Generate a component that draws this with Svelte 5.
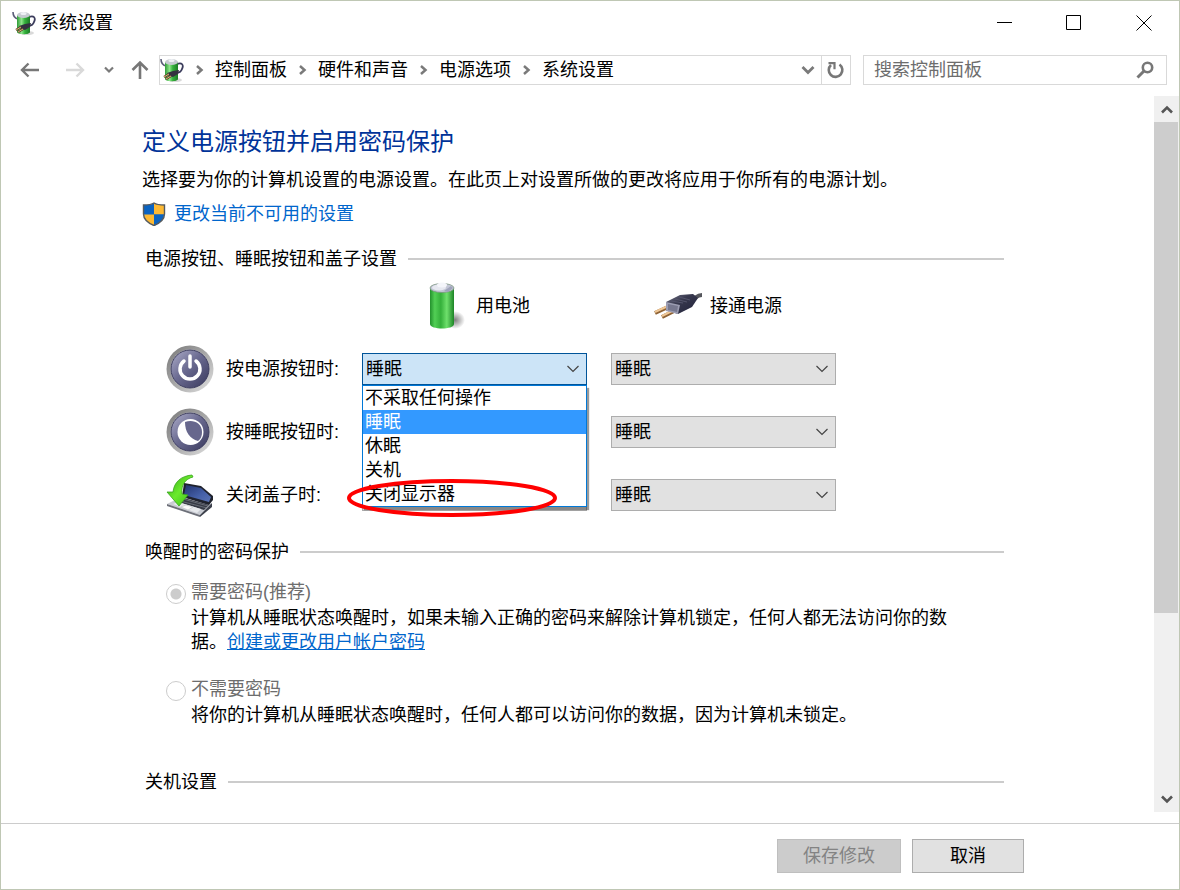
<script>
  const crumbs = ['控制面板', '硬件和声音', '电源选项', '系统设置'];
  const actions = ['不采取任何操作', '睡眠', '休眠', '关机', '关闭显示器'];

  let rows = $state([
    { id: 'power', label: '按电源按钮时:', battery: '睡眠', plugged: '睡眠' },
    { id: 'sleep', label: '按睡眠按钮时:', battery: '睡眠', plugged: '睡眠' },
    { id: 'lid', label: '关闭盖子时:', battery: '睡眠', plugged: '睡眠' }
  ]);

  let openRow = $state('power');
  let search = $state('');

  function toggle(e, id) {
    e.preventDefault();
    openRow = openRow === id ? '' : id;
  }

  function choose(row, action) {
    row.battery = action;
    openRow = '';
  }
</script>

{#snippet powerIcon(id)}
  <svg class="app-icon" viewBox="0 0 24 24" aria-hidden="true">
    <defs>
      <linearGradient id="{id}-body">
        <stop offset="0" stop-color="#2f9b38" />
        <stop offset=".35" stop-color="#8fe58a" />
        <stop offset=".6" stop-color="#35b23c" />
        <stop offset="1" stop-color="#1c7a26" />
      </linearGradient>
    </defs>
    <ellipse cx="15" cy="22" rx="7" ry="2" fill="#000" opacity=".15" />
    <path d="M17 6c5-2 7 1 5 5-1 3-3 4-6 4" fill="none" stroke="#3b3c5c" stroke-width="1.800" />
    <path d="M1 1c0 4 1 6 5 7" fill="none" stroke="#5a5c78" stroke-width="1.600" />
    <path d="M5 4v17c0 3 13 3 13 0V4z" fill="url(#{id}-body)" />
    <ellipse cx="11.500" cy="4" rx="6.500" ry="3" fill="#c5cad0" />
    <ellipse cx="11.500" cy="2.500" rx="3" ry="1.500" fill="#eef0f4" />
    <path d="M7 15l6-2 6-1-1 4-5 3-4-1z" fill="#33323f" />
    <path d="M9 16l-5 3M11 18l-5 3" stroke="#5a4128" stroke-width="2.200" />
    <path d="M9 16l-5 3M11 18l-5 3" stroke="#dcb079" />
  </svg>
{/snippet}

{#snippet crumbArrow()}
  <svg class="crumb-arrow" viewBox="0 0 31 12" aria-hidden="true">
    <path d="M13 2l4.500 4L13 10" fill="none" stroke="#7a7a7a" stroke-width="2.500" />
  </svg>
{/snippet}

{#snippet selectArrow()}
  <svg class="select-arrow" viewBox="0 0 12 8" aria-hidden="true">
    <path d="M.5 1l5.500 5.500L11.500 1" fill="none" stroke="#444" stroke-width="1.200" />
  </svg>
{/snippet}

{#snippet rowIcon(id)}
  {#if id === 'lid'}
    <svg class="big-icon" viewBox="0 0 48 48" aria-hidden="true">
      <defs>
        <linearGradient id="lid-screen" x2="1" y2="1">
          <stop offset="0" stop-color="#22336f" />
          <stop offset=".6" stop-color="#4560a8" />
          <stop offset="1" stop-color="#5b74b4" />
        </linearGradient>
        <linearGradient id="lid-arrow" x2="1" y2="1">
          <stop offset="0" stop-color="#2fa514" />
          <stop offset=".5" stop-color="#6bea2d" />
          <stop offset="1" stop-color="#38b91a" />
        </linearGradient>
      </defs>
      <path d="M1 33l12-6 33 6-12 11z" fill="#c9ccd3" />
      <path d="M1 33l33 11v2L1 35z" fill="#6d7079" />
      <path d="M34 44l12-12v4L34 46z" fill="#3d414c" />
      <path d="M12 31l6-4 25 7-5 5z" fill="#363a45" />
      <path d="M14 30l27 7M17 28l25 7" stroke="#868b96" stroke-width=".6" />
      <path d="M7 33l5-2 23 7-4 4z" fill="#e6e8ec" />
      <path d="M15 36l5-2 7 2-5 3z" fill="#fafafa" stroke="#b4b8bf" stroke-width=".5" />
      <path d="M18 12l17 3 12 10v4l-4 5-27-8z" fill="#1f222d" />
      <path d="M20 14l15 3 10 9-2 5-25-7z" fill="url(#lid-screen)" />
      <path d="M26 4C15 5 8 11 7 21l-6 0 12 14 9-11-6-1C15 14 19 8 27 6z" fill="url(#lid-arrow)" stroke="#39a51e" stroke-width=".8" />
    </svg>
  {:else}
    <svg class="big-icon" viewBox="0 0 48 48" aria-hidden="true">
      <defs>
        <linearGradient id="{id}-rim" x2="1" y2="1">
          <stop offset="0" stop-color="#777" />
          <stop offset=".5" stop-color="#a8a8a8" />
          <stop offset="1" stop-color="#e2e2e2" />
        </linearGradient>
        <linearGradient id="{id}-face" x2="1" y2="1">
          <stop offset="0" stop-color="#b0b0cc" />
          <stop offset=".45" stop-color="#6b6b91" />
          <stop offset="1" stop-color="#38385c" />
        </linearGradient>
      </defs>
      <circle cx="24" cy="24" r="23.500" fill="url(#{id}-rim)" />
      <circle cx="24" cy="24" r="19.500" fill="#dddde4" />
      <circle cx="24" cy="24" r="19" fill="url(#{id}-face)" stroke="#3c3c5c" />
      {#if id === 'power'}
        <path d="M18 16a10 10 0 1 0 12 0" fill="none" stroke="#fff" stroke-width="3.500" stroke-linecap="round" />
        <path d="M24 11v11" stroke="#fff" stroke-width="3.500" stroke-linecap="round" />
      {:else}
        <circle cx="24.500" cy="24" r="13" fill="#fff" />
        <path d="M19 14c7-3 17 0 17 10 0 4-1 7-4 9-8-2-13-9-13-19z" fill="#67678d" />
      {/if}
    </svg>
  {/if}
{/snippet}

<div class="window">
  <header class="title-bar">
    {@render powerIcon('title')}
    <span class="title">系统设置</span>
    <div class="window-buttons">
      <button aria-label="最小化">
        <svg viewBox="0 0 16 16"><path d="M1 7.500h15" stroke="#000" /></svg>
      </button>
      <button aria-label="最大化">
        <svg viewBox="0 0 16 16"><path d="M.5.500h14v14H.5z" fill="none" stroke="#000" /></svg>
      </button>
      <button aria-label="关闭">
        <svg viewBox="0 0 16 16"><path d="M.5.500l15 15M15.500.500l-15 15" stroke="#000" /></svg>
      </button>
    </div>
  </header>

  <nav class="nav-bar">
    <button class="nav-step" aria-label="后退">
      <svg width="20" height="16" viewBox="0 0 20 16"><path d="M19 8H2M8.500 1.500L2 8l6.500 6.500" fill="none" stroke="#777" stroke-width="2.400" /></svg>
    </button>
    <button class="nav-step" aria-label="前进">
      <svg width="20" height="16" viewBox="0 0 20 16"><path d="M1 8h17M11.500 1.500L18 8l-6.500 6.500" fill="none" stroke="#d9d9d9" stroke-width="2.400" /></svg>
    </button>
    <button class="nav-recent" aria-label="最近浏览的位置">
      <svg width="10" height="8" viewBox="0 0 10 8"><path d="M1 1.500l4 4 4-4" fill="none" stroke="#7a7a7a" stroke-width="2.200" /></svg>
    </button>
    <button class="nav-up" aria-label="向上">
      <svg width="18" height="20" viewBox="0 0 18 20"><path d="M9 19V3M1.500 10L9 2.500l7.500 7.500" fill="none" stroke="#777" stroke-width="2.600" /></svg>
    </button>

    <div class="address">
      {@render powerIcon('address')}
      {#each crumbs as crumb}
        {@render crumbArrow()}
        <a href="#top">{crumb}</a>
      {/each}
      <button class="address-drop" aria-label="以前的位置">
        <svg width="14" height="10" viewBox="0 0 14 10"><path d="M1.500 2L7 7.500 12.500 2" fill="none" stroke="#7a7a7a" stroke-width="2.800" /></svg>
      </button>
      <button class="refresh" aria-label="刷新">
        <svg width="18" height="18" viewBox="0 0 18 18">
          <path d="M12.500 3.500a6.800 6.800 0 1 1-8.500.5" fill="none" stroke="#777" stroke-width="2.600" />
          <path d="M1.500 2.200h6v6" fill="none" stroke="#777" stroke-width="2.200" />
        </svg>
      </button>
    </div>

    <div class="search">
      <input type="text" aria-label="搜索控制面板" placeholder="搜索控制面板" bind:value={search} />
      <svg width="18" height="18" viewBox="0 0 18 18" aria-hidden="true">
        <circle cx="11.500" cy="6.500" r="4.700" fill="none" stroke="#777" stroke-width="2.600" />
        <path d="M8 10L1.500 16.500" stroke="#777" stroke-width="3" />
      </svg>
    </div>
  </nav>

  <div class="viewport">
    <main>
      <h1>定义电源按钮并启用密码保护</h1>
      <p class="intro">选择要为你的计算机设置的电源设置。在此页上对设置所做的更改将应用于你所有的电源计划。</p>
      <a class="elevate" href="#change">
        <svg width="24" height="24" viewBox="0 0 24 24" aria-hidden="true">
          <path d="M12 1c3 2 7 2 10 2v9c0 5-4 9-10 12C6 21 2 17 2 12V3c3 0 7 0 10-2z" fill="#0a63c2" />
          <path d="M12 1c3 2 7 2 10 2v9.500H12zM2 12.500h10V24C6 21 2 17 2 12.500z" fill="#fdb933" />
          <path d="M12 12.500h10C22 17 18 21 12 24z" fill="#0a63c2" />
          <path d="M12 1c3 2 7 2 10.500 2v9c0 5-4.500 9-10.500 11.500C6 21 1.500 17 1.500 12V3C5 3 9 3 12 1z" fill="none" stroke="#555b60" stroke-width="1.400" />
        </svg>
        更改当前不可用的设置
      </a>

      <section>
        <h2>电源按钮、睡眠按钮和盖子设置</h2>
        <div class="options">
          <div class="source on-battery">
            <svg class="big-icon" viewBox="0 0 48 48" aria-hidden="true">
              <defs>
                <linearGradient id="battery-body">
                  <stop offset="0" stop-color="#23912d" />
                  <stop offset=".2" stop-color="#52cf55" />
                  <stop offset=".45" stop-color="#35b03b" />
                  <stop offset=".7" stop-color="#6fe06c" />
                  <stop offset="1" stop-color="#1c8426" />
                </linearGradient>
                <radialGradient id="battery-shadow">
                  <stop offset="0" stop-color="#000" stop-opacity=".5" />
                  <stop offset="1" stop-color="#000" stop-opacity="0" />
                </radialGradient>
              </defs>
              <ellipse cx="35" cy="38" rx="10" ry="9" fill="url(#battery-shadow)" />
              <path d="M10 6v36c0 6 24 6 24 0V6z" fill="url(#battery-body)" />
              <ellipse cx="22" cy="6" rx="12" ry="4.500" fill="#c3c6d6" stroke="#769079" stroke-width=".7" />
              <ellipse cx="19" cy="5.500" rx="7" ry="3" fill="#e6e8f0" />
              <path d="M24 9l7-5 2 2-5 4z" fill="#9fa3bb" />
              <ellipse cx="22" cy="3" rx="5" ry="2.500" fill="#f4f5fa" />
            </svg>
            用电池
          </div>
          <div class="source on-mains">
            <svg class="big-icon" viewBox="0 0 48 48" aria-hidden="true">
              <defs>
                <linearGradient id="plug-body" x2="1" y2="1">
                  <stop offset="0" stop-color="#77788c" />
                  <stop offset=".4" stop-color="#38394e" />
                  <stop offset="1" stop-color="#20213a" />
                </linearGradient>
              </defs>
              <path d="M14 25L1 31M20 29L8 35" stroke="#8e6234" stroke-width="4" />
              <path d="M14 24L1 30M20 28L8 34" stroke="#efc796" stroke-width="2" />
              <path d="M38 17c4 0 4-4 10-4" stroke="#55565c" stroke-width="4" fill="none" />
              <path d="M12 20l14-7 13-1 5 4-6 9-14 7-3-1z" fill="url(#plug-body)" />
              <path d="M12 20l14 3-2 9-12-3z" fill="#9c9db2" />
              <path d="M14 22l10 2-1 6-9-2z" fill="#77788f" />
              <path d="M17 19l12 2M21 17l12 3M25 15l11 3" stroke="#54556c" />
            </svg>
            接通电源
          </div>

          {#each rows as row (row.id)}
            {@render rowIcon(row.id)}
            <label class="row-label" for="{row.id}-battery">{row.label}</label>
            <div class="picker">
              <select
                id="{row.id}-battery"
                class:open={openRow === row.id}
                bind:value={row.battery}
                onmousedown={(e) => toggle(e, row.id)}
              >
                {#each actions as action}
                  <option>{action}</option>
                {/each}
              </select>
              {@render selectArrow()}
              {#if openRow === row.id}
                <div class="popup" role="listbox" aria-label={row.label}>
                  {#each actions as action}
                    <button role="option" aria-selected={row.battery === action} onclick={() => choose(row, action)}>{action}</button>
                  {/each}
                  <svg class="marker" viewBox="0 0 212 40" aria-hidden="true">
                    <ellipse cx="106" cy="20" rx="103" ry="17" fill="none" stroke="#f00" stroke-width="4" />
                  </svg>
                </div>
              {/if}
            </div>
            <div class="picker mains">
              <select id="{row.id}-plugged" aria-label="{row.label} 接通电源" bind:value={row.plugged}>
                {#each actions as action}
                  <option>{action}</option>
                {/each}
              </select>
              {@render selectArrow()}
            </div>
          {/each}
        </div>
      </section>

      <section>
        <h2>唤醒时的密码保护</h2>
        <div class="choices">
          <div class="choice">
            <input type="radio" id="need-password" name="password" checked disabled />
            <label for="need-password">需要密码(推荐)</label>
            <p>计算机从睡眠状态唤醒时，如果未输入正确的密码来解除计算机锁定，任何人都无法访问你的数据。<a href="#password">创建或更改用户帐户密码</a></p>
          </div>
          <div class="choice">
            <input type="radio" id="no-password" name="password" disabled />
            <label for="no-password">不需要密码</label>
            <p>将你的计算机从睡眠状态唤醒时，任何人都可以访问你的数据，因为计算机未锁定。</p>
          </div>
        </div>
      </section>

      <section class="shutdown">
        <h2>关机设置</h2>
      </section>
    </main>

    <div class="scrollbar">
      <button aria-label="向上滚动">
        <svg width="12" height="10" viewBox="0 0 12 10"><path d="M1 8.500l5-5 5 5" fill="none" stroke="#555" stroke-width="2.600" /></svg>
      </button>
      <div class="track"><div class="thumb"></div></div>
      <button aria-label="向下滚动">
        <svg width="12" height="10" viewBox="0 0 12 10"><path d="M1 2.500l5 5 5-5" fill="none" stroke="#555" stroke-width="2.600" /></svg>
      </button>
    </div>
  </div>

  <footer>
    <button class="save" disabled>保存修改</button>
    <button class="cancel">取消</button>
  </footer>
</div>

<style>
  :global(body) {
    margin: 0;
    background: #fff;
  }

  .window {
    display: flex;
    flex-direction: column;
    box-sizing: border-box;
    height: 100vh;
    border: 1px solid #bfc7b4;
    background: #fff;
    color: #000;
    font-family: 'Liberation Sans', 'Noto Sans CJK SC', sans-serif;
    font-size: 18px;
    font-weight: 400;
    line-height: 24px;
  }

  button,
  input,
  select {
    box-sizing: border-box;
    margin: 0;
    padding: 0;
    border: 0;
    border-radius: 0;
    background: none;
    color: inherit;
    font: inherit;
  }

  svg {
    flex: none;
    display: block;
  }

  h1,
  h2,
  p {
    margin: 0;
    font-weight: inherit;
  }

  a {
    color: #0066cc;
  }

  .app-icon {
    width: 24px;
    height: 24px;
  }

  .big-icon {
    width: 48px;
    height: 48px;
  }

  /* title bar */
  .title-bar {
    display: flex;
    align-items: center;
    height: 44px;
    padding-left: 11px;
  }

  .title {
    flex: 1;
    padding-left: 5px;
  }

  .window-buttons {
    display: flex;
    height: 100%;
  }

  .window-buttons button {
    display: grid;
    place-items: center;
    width: 70px;
  }

  .window-buttons svg {
    width: 16px;
    height: 16px;
  }

  /* navigation */
  .nav-bar {
    display: flex;
    height: 30px;
    padding: 10px 12px 11px 6px;
  }

  .nav-bar button {
    display: grid;
    place-items: center;
  }

  .nav-step {
    width: 45px;
  }

  .nav-recent {
    width: 24px;
  }

  .nav-up {
    width: 38px;
  }

  .address {
    flex: 1;
    display: flex;
    align-items: center;
    box-sizing: border-box;
    border: 1px solid #d9d9d9;
  }

  .address a {
    color: #000;
    text-decoration: none;
  }

  .crumb-arrow {
    width: 31px;
    height: 12px;
  }

  .address-drop {
    width: 26px;
    height: 100%;
    margin-left: auto;
  }

  .address .refresh {
    width: 29px;
    height: 100%;
    border-left: 1px solid #d9d9d9;
  }

  .search {
    display: flex;
    align-items: center;
    box-sizing: border-box;
    width: 304px;
    margin-left: 12px;
    padding: 0 12px 0 10px;
    border: 1px solid #d9d9d9;
  }

  .search input {
    flex: 1;
    min-width: 0;
    height: 100%;
    outline: 0;
  }

  .search input::placeholder {
    color: #6d6d6d;
    opacity: 1;
  }

  /* content */
  .viewport {
    flex: 1;
    display: flex;
    min-height: 0;
    margin-bottom: 11px;
  }

  main {
    flex: 1;
    min-width: 0;
    padding: 30px 150px 0 141px;
    overflow: hidden;
  }

  h1 {
    color: #003399;
    font-size: 24px;
    line-height: 32px;
  }

  .intro {
    margin-top: 10px;
  }

  .elevate {
    display: flex;
    align-items: center;
    gap: 8px;
    width: fit-content;
    margin-top: 10px;
    text-decoration: none;
  }

  section {
    padding-left: 3px;
  }

  h2 {
    display: flex;
    align-items: center;
    gap: 11px;
    font-size: 18px;
  }

  h2::after {
    content: '';
    flex: 1;
    height: 2px;
    background: #ccc;
  }

  .elevate + section {
    margin-top: 21px;
  }

  .options {
    display: grid;
    grid-template-columns: 48px 124px 225px 225px;
    grid-auto-rows: 63px;
    align-items: center;
    column-gap: 12px;
    margin: 3px 0 14px;
    padding-left: 21px;
  }

  .source {
    display: flex;
    align-items: center;
    gap: 8px;
  }

  .on-battery {
    grid-column: 3;
    padding-left: 58px;
  }

  .on-mains {
    padding-left: 55px;
  }

  .picker {
    position: relative;
  }

  .mains {
    margin: 0 -12px 0 12px;
  }

  select {
    display: block;
    appearance: none;
    width: 100%;
    height: 32px;
    padding: 0 32px 0 3px;
    border: 1px solid #adadad;
    background: #e1e1e1;
    outline: 0;
  }

  select.open {
    border-color: #005499;
    background: #cce4f7;
  }

  .select-arrow {
    position: absolute;
    top: 12px;
    right: 8px;
    width: 12px;
    height: 8px;
    pointer-events: none;
  }

  .popup {
    position: absolute;
    z-index: 1;
    top: 100%;
    left: 0;
    right: 0;
    display: flex;
    flex-direction: column;
    border: 1px solid #0078d7;
    background: #fff;
    box-shadow: 2px 3px 1px rgba(0, 0, 0, 0.4);
  }

  .popup button {
    height: 24px;
    padding-left: 2px;
    text-align: left;
  }

  .popup button[aria-selected='true'] {
    background: #3399ff;
    color: #fff;
  }

  .marker {
    position: absolute;
    left: -17px;
    bottom: -12px;
    width: 212px;
    height: 40px;
    pointer-events: none;
  }

  .choices {
    display: grid;
    gap: 21px;
    padding: 14px 50px 0 21px;
  }

  .choice {
    display: grid;
    grid-template-columns: 20px 1fr;
    column-gap: 5px;
    align-items: center;
  }

  .choice label {
    color: #6d6d6d;
    line-height: 28px;
  }

  .choice p {
    grid-column: 2;
  }

  input[type='radio'] {
    appearance: none;
    width: 20px;
    height: 20px;
    margin-top: 4px;
    border: 1px solid #ccc;
    border-radius: 50%;
  }

  input[type='radio']:checked {
    background: radial-gradient(circle, #ccc 5px, #fff 6px);
  }

  .shutdown {
    margin-top: 43px;
  }

  /* scrollbar */
  .scrollbar {
    display: flex;
    flex-direction: column;
    width: 25px;
    background: #f0f0f0;
  }

  .scrollbar button {
    display: grid;
    place-items: center;
    height: 26px;
  }

  .track {
    flex: 1;
  }

  .thumb {
    height: 74%;
    margin-right: 1px;
    background: #cdcdcd;
  }

  /* footer */
  footer {
    display: flex;
    justify-content: flex-end;
    gap: 11px;
    padding: 15px 155px 16px 0;
    border-top: 1px solid #ccc;
  }

  footer button {
    height: 34px;
    border: 1px solid #adadad;
    background: #e1e1e1;
  }

  .save {
    width: 124px;
  }

  .save:disabled {
    border-color: #bfbfbf;
    background: #ccc;
    color: #838383;
  }

  .cancel {
    width: 112px;
  }
</style>
